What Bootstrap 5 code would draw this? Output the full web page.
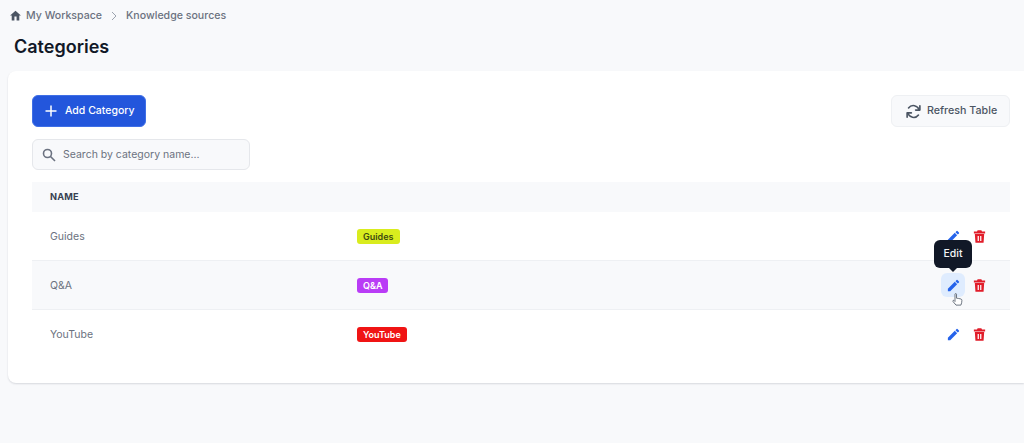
<!DOCTYPE html>
<html lang="en">
<head>
<meta charset="utf-8">
<title>Categories</title>
<link rel="stylesheet" href="https://cdn.jsdelivr.net/npm/bootstrap@5.3.0/dist/css/bootstrap.min.css">
<style>
html,body{height:443px;overflow:hidden}
body{background:#f8f9fb;font-family:Inter,"Liberation Sans",sans-serif;color:#111827}
.crumbs{height:31px;padding-left:9px;font-size:10.6px;font-weight:500;color:#6b7280}
.crumbs svg{display:block}
.page-title{font-size:18px;font-weight:600;line-height:24px;margin:4px 0 12px 14px;color:#111827}
.panel{margin-left:8px;height:312px;background:#fff;border-radius:8px 0 0 8px;box-shadow:0 1px 2px rgba(17,24,39,.14);padding:24px 14px 0 24px}
.add-btn{background:#2356dc;border:1px solid #3f6fe6;border-radius:6px;height:32px;width:114px;color:#fff;font-size:10.5px;font-weight:500;padding:0 0 0 12px;gap:8px}
.add-btn:hover{background:#2356dc;color:#fff}
.refresh-btn{background:#f8f9fb;border:1px solid #eef0f3;border-radius:6px;height:32px;width:119px;color:#4b5563;font-size:10.7px;font-weight:500;padding:0 0 0 13px;gap:5px}
.search-box{width:218px;height:31px;margin-top:12px;background:#f8f9fb;border:1px solid #e5e7eb;border-radius:6px;padding-left:9px;gap:7px}
.search-box input{border:0;background:transparent;outline:0;font-size:10.5px;width:170px;padding:0;color:#374151}
.search-box input::placeholder{color:#6b7280;opacity:1}
.cat-table{margin-top:12px;font-size:10.5px;color:#6b7280}
.cat-head{height:30px;background:#f8f9fb;padding-left:18px;font-size:9.2px;font-weight:700;color:#374151;letter-spacing:.2px}
.cat-row{height:49px;padding-left:18px;border-bottom:1px solid #eef0f3}
.cat-row.shade{background:#f8f9fb}
.cat-row:last-child{border-bottom:0}
.cat-name{width:307px;padding-top:1px}
.tag{font-size:9px;font-weight:600;line-height:15px;padding:0 6px;border-radius:3px;color:#fff}
.tag-guides{background:#d9ec1e;color:#3f4a12}
.tag-qa{background:#b93cf6}
.tag-yt{background:#f01414}
.acts{margin-left:auto;width:72px;padding-left:3px;gap:2px;position:relative}
.act{width:24px;height:24px;border-radius:6px}
.act.on{background:#dfecfe}
.tip{position:absolute;left:-4px;top:-33px;width:38px;height:28px;background:#111827;color:#f3f4f6;border-radius:6px;font-size:10.5px;font-weight:500}
.tip::after{content:"";position:absolute;left:15px;bottom:-4px;border:4px solid transparent;border-bottom:0;border-top-color:#111827}
.hand{position:absolute;left:14px;top:20px}
</style>
</head>
<body>
<nav class="crumbs d-flex align-items-center">
  <svg width="13" height="13" viewBox="0 0 24 24" fill="#4b5563"><path d="M10 21v-7h4v7h5v-9h3L12 3 2 12h3v9z"/></svg>
  <span class="ms-1">My Workspace</span>
  <svg class="mx-2" width="8" height="10" viewBox="0 0 8 10" fill="none" stroke="#9ca3af" stroke-width="1"><path d="M2 1l4 4-4 4"/></svg>
  <span>Knowledge sources</span>
</nav>
<h1 class="page-title">Categories</h1>
<main class="panel">
  <div class="d-flex justify-content-between align-items-start">
    <button class="btn add-btn d-flex align-items-center" type="button">
      <svg width="12" height="12" viewBox="0 0 12 12" stroke="#fff" stroke-width="1.5"><path d="M6 .5v11M.5 6h11"/></svg>
      <span>Add Category</span>
    </button>
    <button class="btn refresh-btn d-flex align-items-center" type="button">
      <svg width="17" height="17" viewBox="0 0 24 24" fill="none" stroke="#4b5563" stroke-width="2.3" stroke-linecap="round" stroke-linejoin="round"><path d="M21 4v6h-6"/><path d="M3 20v-6h6"/><path d="M20 10a8.500 8.500 0 0 0-15-3"/><path d="M4 14a8.500 8.500 0 0 0 15 3"/></svg>
      <span>Refresh Table</span>
    </button>
  </div>
  <div class="search-box d-flex align-items-center">
    <svg width="14" height="14" viewBox="0 0 14 14" fill="none" stroke="#6b7280" stroke-width="1.6"><circle cx="5.500" cy="5.500" r="4"/><path d="M8.500 8.500l4.500 4.500"/></svg>
    <input type="text" placeholder="Search by category name...">
  </div>
  <div class="cat-table">
    <div class="cat-head d-flex align-items-center">NAME</div>
    <div class="cat-row d-flex align-items-center">
      <div class="cat-name">Guides</div><span class="tag tag-guides">Guides</span>
      <div class="acts d-flex align-items-center">
        <div class="act d-flex align-items-center justify-content-center"><svg width="15" height="15" viewBox="0 0 24 24" fill="#2563eb"><path d="M3 17.250V21h3.750L17.810 9.940l-3.750-3.750zM20.710 7.040a1 1 0 0 0 0-1.410l-2.340-2.340a1 1 0 0 0-1.410 0l-1.830 1.830 3.750 3.750z"/></svg></div>
        <div class="act d-flex align-items-center justify-content-center"><svg width="15" height="15" viewBox="0 0 24 24" fill="#e11d2a"><path d="M9 2h6l1 2h5v3H3V4h5zM4.500 8h15l-1 14H5.500zm4.500 3v8h2v-8zm4 0v8h2v-8z"/></svg></div>
      </div>
    </div>
    <div class="cat-row shade d-flex align-items-center">
      <div class="cat-name">Q&amp;A</div><span class="tag tag-qa">Q&amp;A</span>
      <div class="acts d-flex align-items-center">
        <div class="tip d-flex align-items-center justify-content-center">Edit</div>
        <div class="act on d-flex align-items-center justify-content-center"><svg width="15" height="15" viewBox="0 0 24 24" fill="#2563eb"><path d="M3 17.250V21h3.750L17.810 9.940l-3.750-3.750zM20.710 7.040a1 1 0 0 0 0-1.410l-2.340-2.340a1 1 0 0 0-1.410 0l-1.830 1.830 3.750 3.750z"/></svg></div>
        <div class="act d-flex align-items-center justify-content-center"><svg width="15" height="15" viewBox="0 0 24 24" fill="#e11d2a"><path d="M9 2h6l1 2h5v3H3V4h5zM4.500 8h15l-1 14H5.500zm4.500 3v8h2v-8zm4 0v8h2v-8z"/></svg></div>
        <svg class="hand" width="11" height="14" viewBox="0 0 11 14" fill="#fff" stroke="#4b5563" stroke-width=".8" stroke-linejoin="round"><path d="M3 1.200c0-.8 1.500-.8 1.500 0v4l1.800.2 2.600.6c.8.2 1 .8 1 1.500 0 1.500-.4 3-1 4.600H4L1 8.500c-.5-.8.4-1.500 1-1L3 8.500z"/></svg>
      </div>
    </div>
    <div class="cat-row d-flex align-items-center">
      <div class="cat-name">YouTube</div><span class="tag tag-yt">YouTube</span>
      <div class="acts d-flex align-items-center">
        <div class="act d-flex align-items-center justify-content-center"><svg width="15" height="15" viewBox="0 0 24 24" fill="#2563eb"><path d="M3 17.250V21h3.750L17.810 9.940l-3.750-3.750zM20.710 7.040a1 1 0 0 0 0-1.410l-2.340-2.340a1 1 0 0 0-1.410 0l-1.830 1.830 3.750 3.750z"/></svg></div>
        <div class="act d-flex align-items-center justify-content-center"><svg width="15" height="15" viewBox="0 0 24 24" fill="#e11d2a"><path d="M9 2h6l1 2h5v3H3V4h5zM4.500 8h15l-1 14H5.500zm4.500 3v8h2v-8zm4 0v8h2v-8z"/></svg></div>
      </div>
    </div>
  </div>
</main>
<script src="https://cdn.jsdelivr.net/npm/bootstrap@5.3.0/dist/js/bootstrap.bundle.min.js"></script>
</body>
</html>
